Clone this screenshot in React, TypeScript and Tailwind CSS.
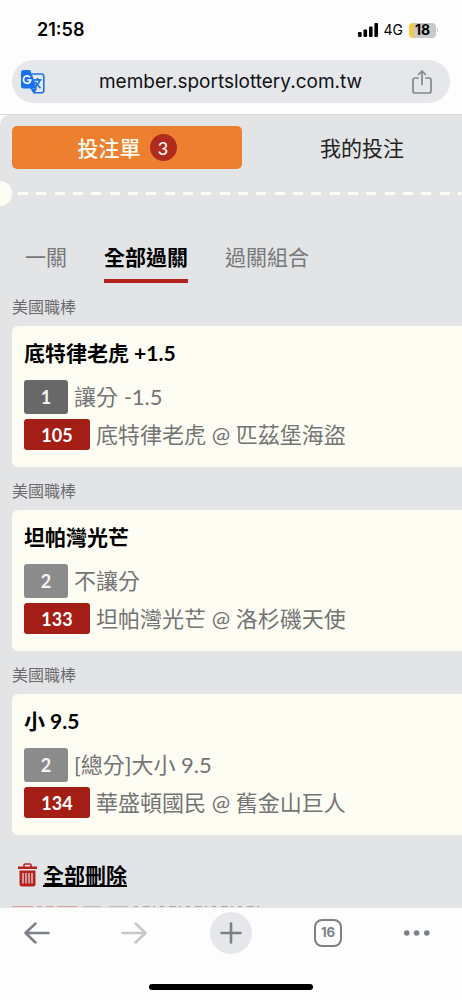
const bets = [
  {
    league: "美國職棒",
    title: "底特律老虎 +1.5",
    option: "1",
    optionColor: "bg-[#686868]",
    market: "讓分 -1.5",
    code: "105",
    match: "底特律老虎 @ 匹茲堡海盜",
  },
  {
    league: "美國職棒",
    title: "坦帕灣光芒",
    option: "2",
    optionColor: "bg-[#8b8b8b]",
    market: "不讓分",
    code: "133",
    match: "坦帕灣光芒 @ 洛杉磯天使",
  },
  {
    league: "美國職棒",
    title: "小 9.5",
    option: "2",
    optionColor: "bg-[#8b8b8b]",
    market: "[總分]大小 9.5",
    code: "134",
    match: "華盛頓國民 @ 舊金山巨人",
  },
];

const StatusBar = () => (
  <div className="flex h-15 items-center justify-between pl-[37px] pr-6 text-black">
    <span className="text-lg font-semibold leading-6">21:58</span>
    <div className="flex items-center gap-[6px]">
      <svg width="20" height="14" viewBox="0 0 20 14" fill="#000">
        <rect x="0" y="9" width="3.6" height="5" rx="1" />
        <rect x="5.5" y="6.5" width="3.6" height="7.5" rx="1" />
        <rect x="11" y="3.5" width="3.6" height="10.5" rx="1" />
        <rect x="16.4" y="0" width="3.6" height="14" rx="1" />
      </svg>
      <span className="text-sm leading-6">4G</span>
      <div className="flex items-center gap-px">
        <span className="flex h-[15px] w-[27px] items-center justify-center rounded bg-[linear-gradient(90deg,#f5cb45_5px,#c9c9c9_5px)] text-sm font-bold">
          18
        </span>
        <span className="h-1 w-px bg-[#c9c9c9]" />
      </div>
    </div>
  </div>
);

const TranslateIcon = () => (
  <svg width="24" height="24" viewBox="0 0 24 24" fill="none">
    <path d="M11 4h9.5a2.3 2.3 0 0 1 2.300 2.300v14.200a2.300 2.300 0 0 1-2.300 2.300H13l-3-5" fill="#e6e7eb" stroke="#1a73e8" strokeWidth="1.6" />
    <path d="M2.500 0h6.700l1.300 3.200 5.500 15.300H2.500A2.500 2.500 0 0 1 0 16V2.500A2.500 2.500 0 0 1 2.500 0Z" fill="#1a73e8" />
    <path d="m10 18.500 3.200 5 3-5Z" fill="#1a73e8" />
    <path d="M9 7.300A3.700 3.700 0 1 0 9.800 10H6.200" stroke="#fff" strokeWidth="1.7" />
    <path d="M13 9.800h7.500M16.600 8v1.800M19 9.800c-.7 3-2.300 5-4.500 6.700M14.500 11.800c1 2.500 2.800 4.500 5 6.200" stroke="#1a73e8" strokeWidth="1.7" />
  </svg>
);

const AddressBar = () => (
  <div className="border-b border-[#d6d7d9] px-3 pb-[11px]">
    <div className="flex h-[43px] items-center rounded-full bg-[#e6e7eb] pl-[9px] pr-[18px]">
      <button type="button" aria-label="翻譯">
        <TranslateIcon />
      </button>
      <input
        type="text"
        aria-label="網址"
        defaultValue="member.sportslottery.com.tw"
        className="h-full min-w-0 flex-1 bg-transparent pl-1 text-center text-[19px] text-[#111214] outline-none"
      />
      <button type="button" aria-label="分享">
        <svg width="20" height="24" viewBox="0 0 20 24" fill="none" stroke="#85878c" strokeWidth="1.7" strokeLinecap="round" strokeLinejoin="round">
          <path d="M6 8H3a2 2 0 0 0-2 2v11a2 2 0 0 0 2 2h14a2 2 0 0 0 2-2V10a2 2 0 0 0-2-2h-3" />
          <path d="M10 14.500V1M6.500 4.500 10 1l3.500 3.500" />
        </svg>
      </button>
    </div>
  </div>
);

const BetCard = ({ bet }: { bet: (typeof bets)[number] }) => (
  <section className="pl-3">
    <h2 className="pt-[14px] pb-[9px] text-base leading-5 text-[#6b6b6d]">{bet.league}</h2>
    <div className="rounded-l-md bg-[#fdfdf3] px-3 pt-[11px] pb-[17px]">
      <h3 className="text-[21px] font-bold leading-8 text-black">{bet.title}</h3>
      <div className="mt-[11px] flex items-center gap-[6px]">
        <span className={`flex h-[34px] w-11 items-center justify-center rounded-[3px] text-lg font-bold text-[#f4f4f4] ${bet.optionColor}`}>
          {bet.option}
        </span>
        <span className="text-[22px] leading-8 text-[#747474]">{bet.market}</span>
      </div>
      <div className="mt-[5px] flex items-center gap-[6px]">
        <span className="flex h-[31px] w-[66px] items-center justify-center rounded-[3px] bg-[#a41e15] text-lg font-bold text-white">
          {bet.code}
        </span>
        <span className="text-[22px] leading-[31px] text-[#747474]">{bet.match}</span>
      </div>
    </div>
  </section>
);

const BottomBar = () => (
  <footer className="bg-[#fdfdfd] pb-[10px]">
    <nav className="flex items-center justify-between px-4 pt-1">
      <button type="button" aria-label="上一頁" className="flex size-[42px] items-center justify-center">
        <svg width="26" height="22" viewBox="0 0 26 22" fill="none" stroke="#7c8187" strokeWidth="2.5" strokeLinecap="round" strokeLinejoin="round">
          <path d="M24.500 11H1.500M11.500 1.500 1.500 11l10 9.500" />
        </svg>
      </button>
      <button type="button" aria-label="下一頁" className="flex size-[42px] items-center justify-center">
        <svg width="26" height="22" viewBox="0 0 26 22" fill="none" stroke="#c8c8c8" strokeWidth="2.5" strokeLinecap="round" strokeLinejoin="round">
          <path d="M1.500 11h23M14.500 1.500l10 9.500-10 9.500" />
        </svg>
      </button>
      <button type="button" aria-label="新分頁" className="flex size-[42px] items-center justify-center rounded-full bg-[#e6e7eb]">
        <svg width="22" height="22" viewBox="0 0 22 22" stroke="#7c8187" strokeWidth="2.6" strokeLinecap="round">
          <path d="M11 1.500v19M1.500 11h19" />
        </svg>
      </button>
      <button type="button" aria-label="分頁" className="flex size-[42px] items-center justify-center">
        <span className="flex size-7 items-center justify-center rounded-lg border-2 border-[#7c8187] text-[13px] font-bold text-[#7c8187]">
          16
        </span>
      </button>
      <button type="button" aria-label="更多" className="flex size-[42px] items-center justify-start">
        <svg width="26" height="6" viewBox="0 0 26 6" fill="#7c8187">
          <circle cx="2.8" cy="3" r="2.8" />
          <circle cx="12.6" cy="3" r="2.8" />
          <circle cx="22.8" cy="3" r="2.8" />
        </svg>
      </button>
    </nav>
    <div className="mx-auto mt-[30px] h-[6px] w-[164px] rounded-full bg-black" />
  </footer>
);

const App = () => {
  return (
    <div className="flex min-h-screen flex-col overflow-hidden bg-[#fdfdfd] font-[Inter,'Noto_Sans_CJK_TC',sans-serif]">
      <header>
        <StatusBar />
        <AddressBar />
      </header>

      <main className="flex-1 rounded-tl-[10px] bg-[#e3e4e6] font-[Lato,'Noto_Sans_CJK_TC',sans-serif]">
        <div className="grid grid-cols-[23fr_20fr] gap-5 pt-[11px] pl-3">
          <button type="button" className="flex h-[43px] items-center justify-center gap-[9px] rounded-[5px] bg-[#ed8030] text-[21px] font-medium text-[#fdfdf3]">
            投注單
            <span className="flex size-[27px] items-center justify-center rounded-full bg-[#b02a1e] text-lg">3</span>
          </button>
          <button type="button" className="h-[43px] text-[21px] text-[#222]">
            我的投注
          </button>
        </div>

        <div className="mt-3 flex items-center">
          <span className="h-[25px] w-3 rounded-r-full bg-[#fdfdf3]" />
          <span className="ml-[6px] h-[3px] flex-1 bg-[repeating-linear-gradient(90deg,#fdfdf3_0_10px,transparent_10px_18px,#fdfdf3_18px_28px,transparent_28px_37px,#fdfdf3_37px_47px,transparent_47px_55px)]" />
        </div>

        <div className="mt-[35px] flex gap-[37px] pl-[25px] text-[21px] leading-8 text-[#77787a]">
          <button type="button" className="h-[42px] pb-[10px]">一關</button>
          <button type="button" className="h-[42px] border-b-4 border-[#b5231f] pb-[6px] font-bold text-black">
            全部過關
          </button>
          <button type="button" className="h-[42px] pb-[10px]">過關組合</button>
        </div>

        {bets.map((bet) => (
          <BetCard key={bet.code} bet={bet} />
        ))}

        <button type="button" className="mt-6 ml-[18px] flex items-center gap-[6px] text-[21px] font-bold leading-8 text-black">
          <svg width="19" height="24" viewBox="0 0 19 24" fill="none">
            <path d="M6 4V2.200C6 1.500 6.500 1 7.200 1h4.600c.7 0 1.200.5 1.200 1.200V4" stroke="#b5231f" strokeWidth="1.6" />
            <path d="M0 3.500h19V6H0ZM1.500 7.500h16V21a2.500 2.500 0 0 1-2.500 2.500H4A2.500 2.500 0 0 1 1.500 21Z" fill="#b5231f" />
            <path d="M5 10v10.500M8 10v10.500M11 10v10.500M14 10v10.500" stroke="#e3e4e6" strokeWidth="1.2" />
          </svg>
          <span className="underline decoration-2 underline-offset-2">全部刪除</span>
        </button>

        {/* top edge of the next line, scrolled under the toolbar */}
        <svg className="mt-[14px] ml-3 block" width="251" height="2" viewBox="0 0 251 2" aria-hidden="true">
          <path d="M0 1.500h21M25 1.500h5M34 1.500h8M45 1.500h20" stroke="#dda29a" />
          <path d="M71 1.500h18M97 1.500h19" stroke="#bdbebf" />
          <path d="M122 1.500h128" stroke="#a9aaab" strokeDasharray="4 5 7 3 2 5" />
        </svg>
      </main>

      <BottomBar />
    </div>
  );
};

export default App;
